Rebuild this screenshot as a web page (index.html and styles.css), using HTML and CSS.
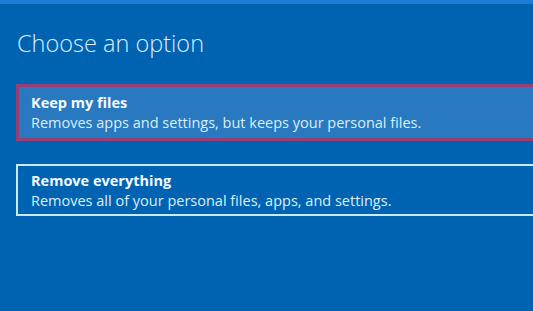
FILE: index.html
```html
<!DOCTYPE html>
<html lang="en">
<head>
<meta charset="utf-8">
<title>Choose an option</title>
<link rel="stylesheet" href="styles.css">
</head>
<body>
<div class="topbar"></div>
<main class="screen">
  <h1 class="title">Choose an option</h1>
  <div class="options">
    <div class="option selected">
      <div class="option-name">Keep my files</div>
      <div class="option-desc">Removes apps and settings, but keeps your personal files.</div>
    </div>
    <div class="option">
      <div class="option-name">Remove everything</div>
      <div class="option-desc">Removes all of your personal files, apps, and settings.</div>
    </div>
  </div>
</main>
</body>
</html>
```
FILE: styles.css
```css
html, body {
  margin: 0;
  padding: 0;
}
body {
  width: 533px;
  height: 311px;
  overflow: hidden;
  background: #0063b1;
  font-family: "Open Sans", "Noto Sans", sans-serif;
  color: #e4f2fc;
}
.topbar {
  height: 4px;
  background: #1a7fd4;
}
.screen {
  padding-left: 16px;
}
.title {
  margin: 0;
  padding-top: 24px;
  padding-left: 1px;
  font-size: 23.5px;
  font-weight: 300;
  line-height: 30px;
  color: #dceefa;
}
.options {
  display: flex;
  flex-direction: column;
  gap: 23px;
  margin-top: 26px;
  margin-right: -20px;
}
.option {
  border: 2px solid #c8ecf6;
  padding: 5px 13px 3px 13px;
}
.option.selected {
  border: 3px solid #963f74;
  background: #2879c0;
  padding: 6px 12px 5px 12px;
}
.option-name {
  font-size: 14.5px;
  font-weight: 700;
  line-height: 20px;
  color: #f4faff;
}
.option-desc {
  font-size: 14.5px;
  font-weight: 400;
  line-height: 20px;
  color: #dceefa;
}
```
